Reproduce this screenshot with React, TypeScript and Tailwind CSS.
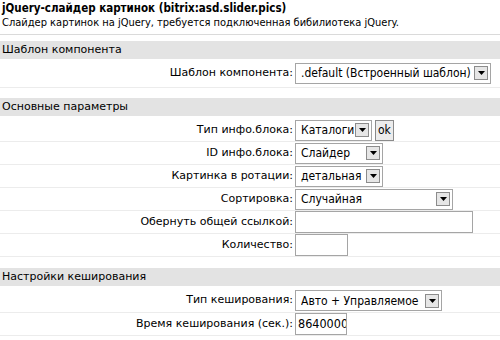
import React from "react";

const ctrlFont = { fontFamily: '"DejaVu Sans Condensed", "DejaVu Sans", sans-serif' };

function Arrow() {
  return (
    <span className="ml-auto mr-[2px] flex h-[14px] w-[14px] shrink-0 items-center justify-center border border-[#8c8c8c] bg-[#e6e6e6]">
      <svg width="7" height="4" viewBox="0 0 7 4">
        <path d="M0 0h7L3.5 4z" fill="#000" />
      </svg>
    </span>
  );
}

function Select({ value, w }: { value: string; w: string }) {
  return (
    <div className={`flex h-[21px] items-center border border-[#a5a5a5] bg-white pl-[5px] text-[12px] ${w}`} style={ctrlFont}>
      <span className="min-w-0 flex-1 overflow-hidden whitespace-nowrap">{value}</span>
      <Arrow />
    </div>
  );
}

function Input({ value = "", w }: { value?: string; w: string }) {
  return (
    <div
      className={`flex h-[22px] items-center overflow-hidden whitespace-nowrap border border-[#a5a5a5] bg-white pl-[2px] text-[12.5px] ${w}`}
      style={ctrlFont}
    >
      {value}
    </div>
  );
}

function Row({ label, children, h = "h-[23px]" }: { label: string; children: React.ReactNode; h?: string }) {
  return (
    <div className={`flex items-center border-b border-[#ececec] ${h}`}>
      <div className="w-[294px] shrink-0 pr-[1px] text-right">{label}</div>
      <div className="flex items-center gap-[3px] pl-[1px]">{children}</div>
    </div>
  );
}

function Header({ title }: { title: string }) {
  return <div className="flex h-[18px] items-center bg-[#e3e3e3] pl-[2px]">{title}</div>;
}

export default function App() {
  return (
    <div
      className="h-[340px] w-[500px] overflow-hidden bg-white text-[11px] text-black"
      style={{ fontFamily: '"DejaVu Sans", Verdana, sans-serif' }}
    >
      <div className="border-b border-[#dadada] px-[2px] pt-[2px] pb-[5px] leading-[13px]" style={ctrlFont}>
        <div className="text-[11.5px] font-bold">jQuery-слайдер картинок (bitrix:asd.slider.pics)</div>
        <div className="mt-[1px]">Слайдер картинок на jQuery, требуется подключенная бибилиотека jQuery.</div>
      </div>

      <div className="mt-[6px]">
        <Header title="Шаблон компонента" />
        <Row label="Шаблон компонента:" h="h-[29px]">
          <Select value=".default (Встроенный шаблон)" w="w-[196px]" />
        </Row>
      </div>

      <div className="mt-[10px]">
        <Header title="Основные параметры" />
        <Row label="Тип инфо.блока:" h="h-[26px] pt-[3px]">
          <Select value="Каталоги" w="w-[77px]" />
          <div className="flex h-[21px] items-center border border-[#8a8a8a] bg-[#ececec] px-[2px] text-[12px]" style={ctrlFont}>
            ok
          </div>
        </Row>
        <Row label="ID инфо.блока:">
          <Select value="Слайдер" w="w-[88px]" />
        </Row>
        <Row label="Картинка в ротации:">
          <Select value="детальная" w="w-[88px]" />
        </Row>
        <Row label="Сортировка:">
          <Select value="Случайная" w="w-[158px]" />
        </Row>
        <Row label="Обернуть общей ссылкой:">
          <Input w="w-[178px]" />
        </Row>
        <Row label="Количество:">
          <Input w="w-[53px]" />
        </Row>
      </div>

      <div className="mt-[11px]">
        <Header title="Настройки кеширования" />
        <Row label="Тип кеширования:" h="h-[27px] pt-[3px]">
          <Select value="Авто + Управляемое" w="w-[147px]" />
        </Row>
        <Row label="Время кеширования (сек.):">
          <Input value="86400000" w="w-[52px]" />
        </Row>
      </div>
    </div>
  );
}
